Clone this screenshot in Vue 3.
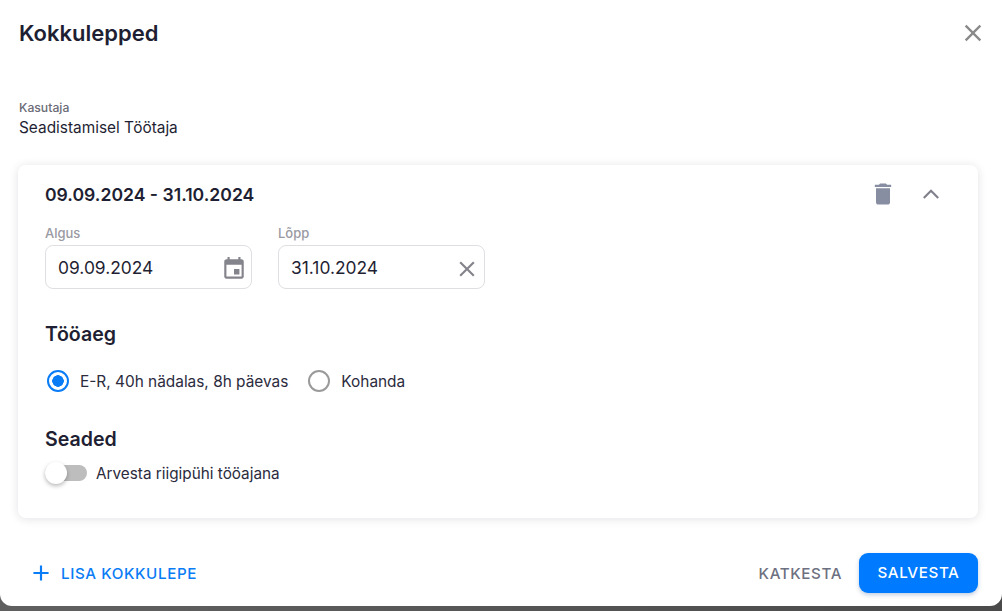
<script setup>
import { ref } from "vue";

const title = "Kokkulepped";
const startDate = ref("09.09.2024");
const endDate = ref("31.10.2024");
</script>

<template>
  <div class="page">
    <div class="dialog">
      <header class="head">
        <h1>{{ title }}</h1>
        <svg class="close" viewBox="0 0 24 24" width="28" height="28">
          <path d="M19 6.41 17.59 5 12 10.59 6.41 5 5 6.41 10.59 12 5 17.59 6.41 19 12 13.41 17.59 19 19 17.59 13.41 12z" />
        </svg>
      </header>

      <div class="user">
        <div class="user-label">Kasutaja</div>
        <div class="user-name">Seadistamisel Töötaja</div>
      </div>

      <section class="card">
        <div class="card-head">
          <div class="range">{{ startDate }} - {{ endDate }}</div>
          <div class="card-actions">
            <svg class="trash" viewBox="0 0 24 24" width="28" height="28">
              <path d="M6 19c0 1.1.9 2 2 2h8c1.1 0 2-.9 2-2V7H6v12zM19 4h-3.5l-1-1h-5l-1 1H5v2h14V4z" />
            </svg>
            <svg class="chevron" viewBox="0 0 24 24" width="32" height="32">
              <path d="M6.6 15 12 9.6l5.4 5.4" />
            </svg>
          </div>
        </div>

        <div class="dates">
          <div class="field">
            <label>Algus</label>
            <div class="input">
              <span>{{ startDate }}</span>
              <svg viewBox="0 0 24 24" width="26" height="26">
                <path d="M17 12h-5v5h5v-5zM16 1v2H8V1H6v2H5c-1.11 0-1.99.9-1.99 2L3 19c0 1.1.89 2 2 2h14c1.1 0 2-.9 2-2V5c0-1.1-.9-2-2-2h-1V1h-2zm3 18H5V8h14v11z" />
              </svg>
            </div>
          </div>
          <div class="field">
            <label>Lõpp</label>
            <div class="input">
              <span>{{ endDate }}</span>
              <svg viewBox="0 0 24 24" width="26" height="26">
                <path d="M19 6.41 17.59 5 12 10.59 6.41 5 5 6.41 10.59 12 5 17.59 6.41 19 12 13.41 17.59 19 19 17.59 13.41 12z" />
              </svg>
            </div>
          </div>
        </div>

        <h2 class="worktime">Tööaeg</h2>
        <div class="radios">
          <div class="radio">
            <span class="dot checked"></span>
            <span>E-R, 40h nädalas, 8h päevas</span>
          </div>
          <div class="radio">
            <span class="dot"></span>
            <span>Kohanda</span>
          </div>
        </div>

        <h2 class="settings">Seaded</h2>
        <div class="switch-row">
          <span class="switch"><span class="thumb"></span></span>
          <span>Arvesta riigipühi tööajana</span>
        </div>
      </section>

      <footer class="foot">
        <button class="btn-add">
          <svg viewBox="0 0 24 24" width="26" height="26">
            <path d="M19 13h-6v6h-2v-6H5v-2h6V5h2v6h6v2z" />
          </svg>
          <span>LISA KOKKULEPE</span>
        </button>
        <div class="foot-right">
          <button class="btn-cancel">KATKESTA</button>
          <button class="btn-save">SALVESTA</button>
        </div>
      </footer>
    </div>
  </div>
</template>

<style>
html,
body {
  margin: 0;
  padding: 0;
}
</style>

<style scoped>
.page {
  width: 1002px;
  height: 611px;
  overflow: hidden;
  background: linear-gradient(90deg, #5f5f5f 0, #5f5f5f 90px, #4a4a4a 100%);
  font-family: Inter, "Liberation Sans", sans-serif;
  color: #1f1f33;
}
.dialog {
  box-sizing: border-box;
  width: 1002px;
  height: 606px;
  background: #fff;
  border-radius: 0 0 12px 12px;
  padding: 0 24px 0 18px;
  display: flex;
  flex-direction: column;
}
.head {
  display: flex;
  align-items: center;
  justify-content: space-between;
  height: 66px;
}
h1 {
  margin: 0 0 0 1px;
  font-size: 22px;
  font-weight: 600;
}
.close {
  fill: #8a8a8a;
  margin-right: -9px;
}
.user {
  margin-top: 34px;
  margin-left: 1px;
}
.user-label {
  font-size: 12.2px;
  line-height: 15px;
  font-weight: 500;
  color: #6b6b76;
}
.user-name {
  font-size: 15.4px;
  line-height: 24px;
  margin-top: 1px;
}
.card {
  box-sizing: border-box;
  margin-top: 25px;
  width: 960px;
  height: 353px;
  background: #fff;
  border-radius: 8px;
  box-shadow: 0 1px 10px rgba(30, 30, 60, 0.13);
  padding: 14px 27px 0;
}
.card-head {
  display: flex;
  align-items: center;
  justify-content: space-between;
  height: 30px;
}
.range {
  font-size: 17.6px;
  font-weight: 600;
}
.card-actions {
  display: flex;
  align-items: center;
  gap: 18px;
  margin-right: 4px;
}
.trash {
  fill: #878ea1;
}
.chevron {
  fill: none;
  stroke: #80808c;
  stroke-width: 1.6;
}
.dates {
  display: flex;
  gap: 26px;
  margin-top: 16px;
}
.field label {
  display: block;
  font-size: 13px;
  line-height: 16px;
  font-weight: 500;
  color: #9a9aa2;
  margin-bottom: 4px;
}
.input {
  box-sizing: border-box;
  width: 207px;
  height: 44px;
  border: 1px solid #dfdfe3;
  border-radius: 8px;
  padding: 0 4px 0 12px;
  display: flex;
  align-items: center;
  justify-content: space-between;
  font-size: 17.4px;
}
.input svg {
  fill: #84848c;
  margin-top: 3px;
}
h2 {
  margin: 0;
  font-size: 19.6px;
  line-height: 24px;
  font-weight: 600;
}
.worktime {
  margin-top: 33px;
}
.radios {
  display: flex;
  gap: 18px;
  margin-top: 23px;
  font-size: 15.4px;
}
.radio {
  display: flex;
  align-items: center;
  gap: 11px;
  height: 24px;
  color: #2b2b3d;
}
.dot {
  box-sizing: border-box;
  width: 22px;
  height: 22px;
  margin-left: 2px;
  border: 2px solid #9a9a9a;
  border-radius: 50%;
}
.dot.checked {
  border-color: #0a7cf5;
  background: radial-gradient(circle, #0a7cf5 0 5.5px, transparent 6px);
}
.settings {
  margin-top: 34px;
}
.switch-row {
  display: flex;
  align-items: center;
  gap: 9px;
  margin-top: 10px;
  font-size: 15.3px;
  height: 24px;
  color: #2b2b3d;
}
.switch {
  position: relative;
  display: block;
  width: 42px;
  height: 16px;
  border-radius: 8px;
  background: #bdbdbd;
}
.thumb {
  position: absolute;
  left: 0;
  top: -3px;
  width: 22px;
  height: 22px;
  border-radius: 50%;
  background: #fff;
  box-shadow: 0 2px 4px rgba(0, 0, 0, 0.28);
}
.foot {
  display: flex;
  align-items: center;
  justify-content: space-between;
  width: 960px;
  margin-top: 34px;
  height: 41px;
}
button {
  border: 0;
  background: none;
  font-family: inherit;
  font-size: 15.2px;
  font-weight: 500;
  letter-spacing: 0.6px;
  padding: 0;
}
.btn-add {
  display: flex;
  align-items: center;
  gap: 7px;
  color: #0a7cf5;
  margin-left: 10px;
}
.btn-add svg {
  fill: #0a7cf5;
}
.btn-add span {
  padding-top: 1px;
}
.foot-right {
  display: flex;
  align-items: center;
  gap: 17px;
}
.btn-cancel {
  color: #6d7080;
  padding-top: 2px;
}
.btn-save {
  width: 119px;
  height: 40px;
  color: #fff;
  background: #007bff;
  border-radius: 9px;
  box-shadow: 0 2px 4px rgba(0, 60, 140, 0.25);
}
</style>
